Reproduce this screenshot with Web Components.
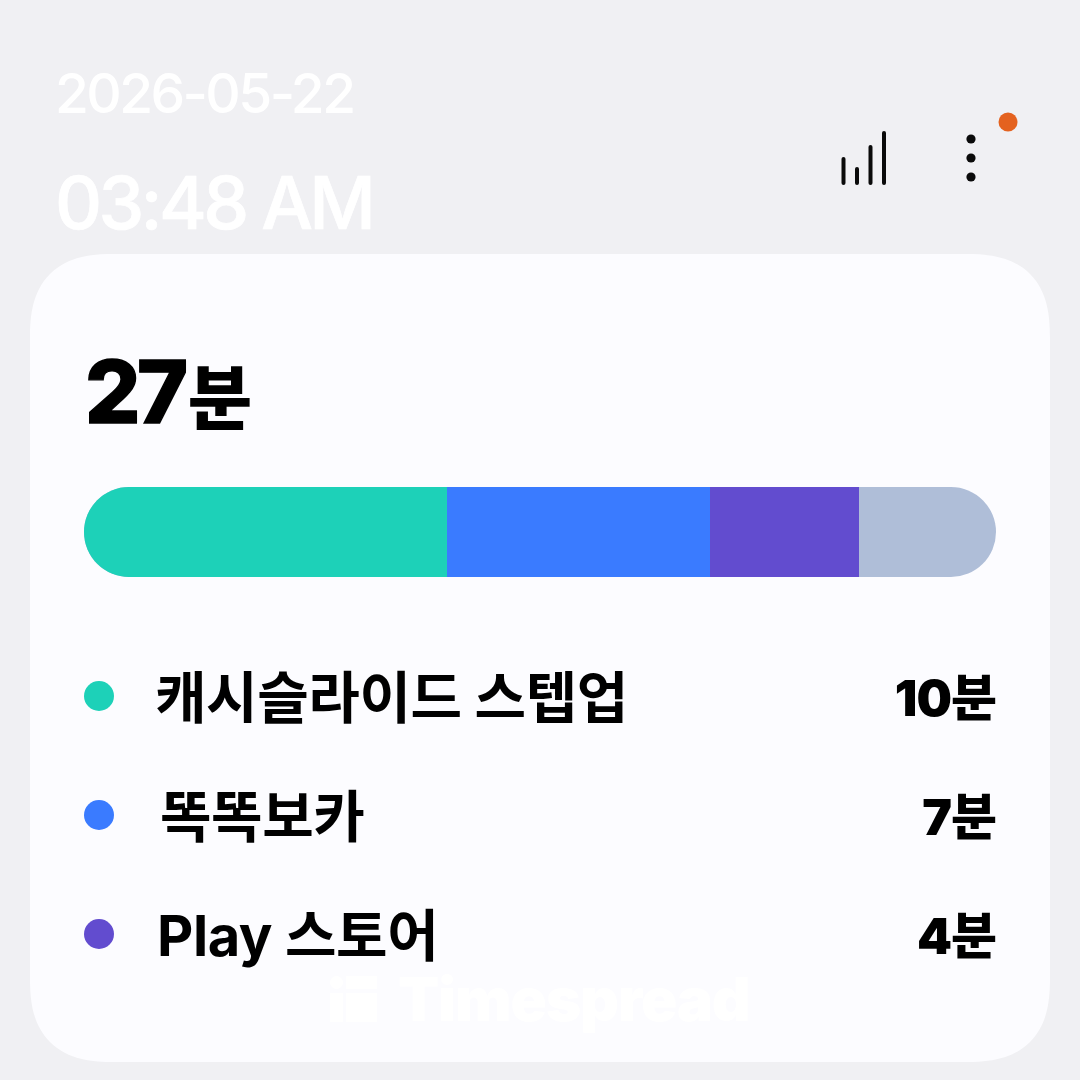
<!DOCTYPE html>
<html lang="ko">
<head>
<meta charset="utf-8">
<title>Timespread</title>
<style>
  html, body { margin: 0; height: 100%; }
  body { background: #f0f0f3; font-family: Inter, "Noto Sans CJK KR", sans-serif; }
</style>
</head>
<body>
<widget-shell>
  <status-header date="2026-05-22" time="03:48 AM"></status-header>
  <usage-card total="27" unit="분">
    <usage-row color="#1dd1b8" name="캐시슬라이드 스텝업" value="10분" weight="363" nudge="-2"></usage-row>
    <usage-row color="#3a7bff" name="똑똑보카" value="7분" weight="263" nudge="3"></usage-row>
    <usage-row color="#624ccf" name="Play 스토어" value="4분" weight="149"></usage-row>
  </usage-card>
</widget-shell>

<script>
// Page frame: header on the grey ground, card below it.
class WidgetShell extends HTMLElement {
  constructor() {
    super();
    this.attachShadow({ mode: "open" }).innerHTML = `
      <style>
        :host { display: flex; flex-direction: column; width: 1080px; height: 1080px; box-sizing: border-box; padding: 0 30px 18px; }
      </style>
      <slot></slot>`;
  }
}

class StatusHeader extends HTMLElement {
  connectedCallback() {
    const root = this.shadowRoot || this.attachShadow({ mode: "open" });
    root.innerHTML = `
      <style>
        :host { display: flex; justify-content: space-between; height: 254px; flex: none; color: #fff; font-family: Inter, sans-serif; }
        .clock { display: flex; flex-direction: column; padding: 58px 0 0 25px; }
        .date { font-size: 55px; line-height: 70px; font-weight: 500; letter-spacing: -2.6px; }
        /* Inter only ships whole weights here; the thin stroke lands between 500 and 600 */
        .time { font-size: 73px; line-height: 88px; margin-top: 31px; font-weight: 500; letter-spacing: -3.7px; -webkit-text-stroke: 0.7px #fff; }
        .icons { display: flex; align-items: flex-start; padding: 103px 30px 0 0; }
        svg { display: block; }
      </style>
      <div class="clock">
        <div class="date">${this.getAttribute("date")}</div>
        <div class="time">${this.getAttribute("time")}</div>
      </div>
      <div class="icons">
        <svg width="190" height="90" viewBox="0 0 190 90">
          <g stroke="#0a0a0a" stroke-width="4" stroke-linecap="round">
            <line x1="13.5" y1="56" x2="13.5" y2="80"/>
            <line x1="27" y1="66" x2="27" y2="80"/>
            <line x1="40.5" y1="44" x2="40.5" y2="80"/>
            <line x1="54" y1="30" x2="54" y2="80"/>
          </g>
          <g fill="#0a0a0a">
            <circle cx="141" cy="36" r="4.6"/>
            <circle cx="141" cy="55" r="4.6"/>
            <circle cx="141" cy="74" r="4.6"/>
          </g>
          <circle cx="178" cy="19" r="9.5" fill="#e4621f"/>
        </svg>
      </div>`;
  }
}

// Reads its rows and draws the stacked bar from their weights.
class UsageCard extends HTMLElement {
  connectedCallback() {
    const root = this.shadowRoot || this.attachShadow({ mode: "open" });
    const rows = [...this.querySelectorAll("usage-row")];
    const segs = rows
      .map((r) => `<i style="width:${r.getAttribute("weight")}px;background:${r.getAttribute("color")}"></i>`)
      .join("");
    root.innerHTML = `
      <style>
        :host { display: flex; flex-direction: column; flex: 1; box-sizing: border-box; position: relative; background: #fcfcff; border-radius: 84px; corner-shape: superellipse(1.35); padding: 88px 54px 0; color: #000; font-family: Inter, "Noto Sans CJK KR", sans-serif; }
        .total { display: flex; align-items: baseline; font-weight: 800; line-height: 100px; height: 100px; margin-left: 1px; }
        .num { font-size: 87px; letter-spacing: -3.5px; -webkit-text-stroke: 1.4px #000; }
        .unit { font-size: 70px; font-weight: 900; margin-left: 3px; position: relative; top: 1px; }
        .bar { display: flex; height: 90px; margin-top: 45px; border-radius: 45px; overflow: hidden; background: #afbed8; }
        .bar i { display: block; flex: none; }
        .rows { display: flex; flex-direction: column; margin-top: 90px; gap: 61px; }
        .logo { position: absolute; left: 300px; top: 722px; display: flex; align-items: center; gap: 21px; color: #fff; font-weight: 900; font-size: 60px; line-height: 46px; letter-spacing: -1px; }
        .logo svg { display: block; flex: none; }
      </style>
      <div class="total"><span class="num">${this.getAttribute("total")}</span><span class="unit">${this.getAttribute("unit")}</span></div>
      <div class="bar">${segs}</div>
      <div class="rows"><slot></slot></div>
      <div class="logo">
        <svg width="47" height="46" viewBox="0 0 47 46" fill="#fff">
          <circle cx="6.5" cy="6.5" r="6.5"/>
          <rect x="16" y="0" width="31" height="13"/>
          <rect x="0" y="17" width="13" height="29"/>
          <rect x="16" y="17" width="31" height="29"/>
        </svg>
        <span>Timespread</span>
      </div>`;
  }
}

class UsageRow extends HTMLElement {
  connectedCallback() {
    const root = this.shadowRoot || this.attachShadow({ mode: "open" });
    const nudge = this.getAttribute("nudge") || 0;
    root.innerHTML = `
      <style>
        :host { display: flex; align-items: center; height: 58px; font-family: Inter, "Noto Sans CJK KR", sans-serif; color: #000; }
        .dot { width: 30px; height: 30px; border-radius: 50%; flex: none; background: ${this.getAttribute("color")}; }
        .name { margin-left: ${43 + Number(nudge)}px; flex: 1; font-size: 56px; font-weight: 700; line-height: 58px; letter-spacing: -0.4px; padding-top: 3px; }
        .value { font-size: 50px; font-weight: 900; line-height: 58px; letter-spacing: -1px; padding-top: 3px; }
      </style>
      <span class="dot"></span>
      <span class="name">${this.getAttribute("name")}</span>
      <span class="value">${this.getAttribute("value")}</span>`;
  }
}

customElements.define("widget-shell", WidgetShell);
customElements.define("status-header", StatusHeader);
customElements.define("usage-card", UsageCard);
customElements.define("usage-row", UsageRow);
</script>
</body>
</html>
